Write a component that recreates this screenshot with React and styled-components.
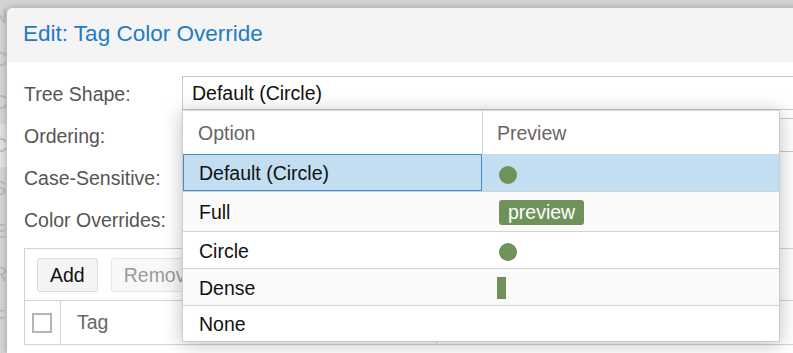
import React from 'react'
import styled, { createGlobalStyle } from 'styled-components'

const GlobalStyle = createGlobalStyle`
  html, body {
    margin: 0;
    padding: 0;
    background: #d4d4d4;
  }
  body {
    font-family: "Liberation Sans", Arial, sans-serif;
  }
  * { box-sizing: border-box; }
`

const GREEN = '#6f925b'

const backList = [
    { label: 'N' },
    { label: 'C' },
    { label: 'C' },
    { label: 'C', selected: true },
    { label: 'S' },
    { label: 'E' },
    { label: 'R' },
    { label: 'F' },
]

// row heights follow the reference (the badge row is a bit taller)
const shapes = [
    { name: 'Default (Circle)', preview: 'circle', selected: true, h: 37 },
    { name: 'Full', preview: 'full', h: 40 },
    { name: 'Circle', preview: 'circle', h: 37 },
    { name: 'Dense', preview: 'dense', h: 37 },
    { name: 'None', preview: null, h: 36 },
]

function Preview({ kind }) {
    if (kind === 'circle') return <Dot />
    if (kind === 'full') return <Badge>preview</Badge>
    if (kind === 'dense') return <Bar />
    return null
}

function ShapePicker() {
    return (
        <PickerStyled>
            <PickerHead>
                <HeadCell>Option</HeadCell>
                <HeadCell $divider>Preview</HeadCell>
            </PickerHead>
            {shapes.map((s, i) => (
                <PickerRow key={s.name} $h={s.h} $selected={s.selected} $alt={i % 2 === 1} $first={i === 0}>
                    <OptionCell $focused={s.selected}>{s.name}</OptionCell>
                    <PreviewCell>
                        <Preview kind={s.preview} />
                    </PreviewCell>
                </PickerRow>
            ))}
        </PickerStyled>
    )
}

function App() {
    return (
        <>
            <GlobalStyle />
            <Page>
                <BackList>
                    {backList.map((b, i) => (
                        <BackItem key={i} $selected={b.selected}>{b.label}</BackItem>
                    ))}
                </BackList>
                <Dialog>
                    <DialogHeader>Edit: Tag Color Override</DialogHeader>
                    <DialogBody>
                        <FormRow>
                            <Label>Tree Shape:</Label>
                            <SelectWrap>
                                <Select>Default (Circle)</Select>
                                <ShapePicker />
                            </SelectWrap>
                        </FormRow>
                        <FormRow>
                            <Label>Ordering:</Label>
                            <Select />
                        </FormRow>
                        <FormRow>
                            <Label>Case-Sensitive:</Label>
                            <div />
                        </FormRow>
                        <FormRow>
                            <Label>Color Overrides:</Label>
                            <div />
                        </FormRow>
                        <GridBox>
                            <Toolbar>
                                <ToolButton>Add</ToolButton>
                                <ToolButton $disabled>Remove</ToolButton>
                            </Toolbar>
                            <GridHead>
                                <CheckCell>
                                    <Check />
                                </CheckCell>
                                <TagCell>Tag</TagCell>
                                <ColorCell />
                            </GridHead>
                        </GridBox>
                    </DialogBody>
                </Dialog>
            </Page>
        </>
    )
}

const Page = styled.div`
    display: flex;
    height: 353px;
    width: 793px;
    overflow: hidden;
    background: #d4d4d4;
`

const BackList = styled.div`
    width: 7px;
    flex-shrink: 0;
    margin-top: -5px;
    overflow: hidden;
`

const BackItem = styled.div`
    height: 43px;
    line-height: 43px;
    font-size: 19.5px;
    color: #b9b9b9;
    text-indent: -7px;
    white-space: nowrap;
    background: ${p => p.$selected ? '#e2e2e2' : 'transparent'};
`

const Dialog = styled.div`
    flex-shrink: 0;
    width: 900px;
    margin-top: 8px;
    background: #fff;
    border-radius: 6px 0 0 0;
    box-shadow: 0 0 7px rgba(0, 0, 0, 0.28);
    position: relative;
`

const DialogHeader = styled.div`
    height: 54px;
    display: flex;
    align-items: center;
    padding: 0 0 2px 16px;
    background: #f4f4f4;
    border-radius: 6px 0 0 0;
    color: #1f7bc7;
    font-size: 22.5px;
`

const DialogBody = styled.div`
    padding: 14px 0 0 17px;
`

const FormRow = styled.div`
    display: grid;
    grid-template-columns: 158px 1fr;
    align-items: center;
    height: 34px;
    margin-bottom: 8px;
`

const Label = styled.div`
    font-size: 19.5px;
    color: #555;
    padding-top: 2px;
`

const SelectWrap = styled.div`
    position: relative;
    z-index: 5;
`

const Select = styled.div`
    height: 34px;
    border: 1px solid #c9c9c9;
    padding-left: 9px;
    display: flex;
    align-items: center;
    font-size: 19.5px;
    color: #111;
    background: #fff;
`

const PickerStyled = styled.div`
    position: absolute;
    top: 34px;
    left: 0;
    width: 598px;
    background: #fff;
    border: 1px solid #cdcdcd;
    border-top-color: #d6d6d6;
    box-shadow: 0 2px 18px rgba(0, 0, 0, 0.26);
`

const PickerHead = styled.div`
    display: grid;
    grid-template-columns: 299px 1fr;
    height: 43px;
`

const HeadCell = styled.div`
    display: flex;
    align-items: center;
    padding: 1px 0 0 ${p => p.$divider ? '14px' : '15px'};
    border-left: ${p => p.$divider ? '1px solid #d3d3d3' : 'none'};
    font-size: 19.5px;
    color: #666;
`

const PickerRow = styled.div`
    display: grid;
    grid-template-columns: 299px 1fr;
    height: ${p => p.$h}px;
    border-top: ${p => p.$first ? 'none' : '1px solid #d2d2d2'};
    background: ${p => p.$selected ? '#c3ddf1' : p.$alt ? '#fafafa' : '#fff'};
`

const OptionCell = styled.div`
    display: flex;
    align-items: center;
    padding: 2px 0 0 15px;
    font-size: 19.5px;
    color: #111;
    border: 1px solid ${p => p.$focused ? '#3d8fd1' : 'transparent'};
`

const PreviewCell = styled.div`
    display: flex;
    align-items: center;
    padding: 2px 0 0 15px;
`

const Dot = styled.span`
    width: 18px;
    height: 18px;
    margin: 2px 0 0 2px;
    border-radius: 50%;
    background: ${GREEN};
`

const Badge = styled.span`
    display: inline-flex;
    align-items: center;
    height: 25px;
    margin-left: 2px;
    padding: 0 9px;
    border-radius: 3px;
    background: ${GREEN};
    color: #fff;
    font-size: 19.5px;
`

const Bar = styled.span`
    width: 9px;
    height: 22px;
    background: ${GREEN};
`

const GridBox = styled.div`
    margin-top: 12px;
    border: 1px solid #d3d3d3;
    border-right: none;
`

const Toolbar = styled.div`
    display: flex;
    gap: 13px;
    height: 52px;
    padding: 9px 0 0 12px;
    border-bottom: 1px solid #d3d3d3;
`

const ToolButton = styled.div`
    height: 34px;
    padding: 0 12px;
    display: flex;
    align-items: center;
    border: 1px solid ${p => p.$disabled ? '#e6e6e6' : '#dadada'};
    border-radius: 3px;
    background: ${p => p.$disabled ? '#f8f8f8' : '#f4f4f4'};
    color: ${p => p.$disabled ? '#9a9a9a' : '#111'};
    font-size: 19.5px;
`

const GridHead = styled.div`
    display: grid;
    grid-template-columns: 36px 376px 1fr;
    height: 43px;
`

const CheckCell = styled.div`
    display: flex;
    align-items: center;
    padding-left: 7px;
    border-right: 1px solid #d3d3d3;
`

const Check = styled.span`
    width: 20px;
    height: 20px;
    margin-top: 1px;
    border: 2px solid #b5b5b5;
    background: #fff;
`

const TagCell = styled.div`
    display: flex;
    align-items: center;
    padding-left: 16px;
    border-right: 1px solid #d3d3d3;
    font-size: 19.5px;
    color: #666;
`

const ColorCell = styled.div``

export default App
